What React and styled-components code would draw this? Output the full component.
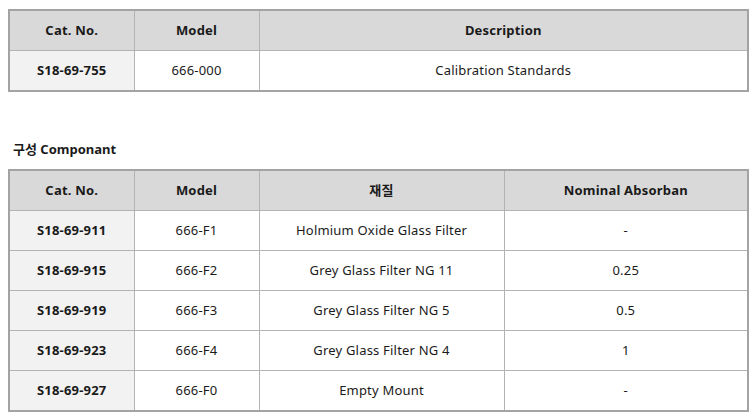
import styled, { createGlobalStyle } from "styled-components";

const GlobalStyle = createGlobalStyle`
  html, body {
    margin: 0;
    padding: 0;
    background: #ffffff;
  }
  body {
    font-family: "Noto Sans", "Noto Sans CJK KR", sans-serif;
    font-size: 13px;
    color: #1a1a1a;
  }
`;

const Page = styled.div`
  width: 741px;
  padding: 9px 0 0 8px;
`;

const Table = styled.table`
  width: 741px;
  border-collapse: collapse;
  border: 2px solid #a3a3a3;
  table-layout: fixed;
`;

const Th = styled.th`
  height: 37px;
  padding: 0 6px 2px;
  background: #d9d9d9;
  border: 1px solid #b3b3b3;
  font-weight: 700;
  text-align: center;
  letter-spacing: 0.2px;
  color: #1a1a1a;
`;

const Td = styled.td`
  height: 37px;
  padding: 0 6px 2px;
  background: ${(props) => (props.$key ? "#f2f2f2" : "#ffffff")};
  border: 1px solid #b3b3b3;
  font-weight: ${(props) => (props.$key ? 700 : 400)};
  letter-spacing: 0.2px;
  text-align: center;
`;

const Heading = styled.h3`
  margin: 48px 0 11px 5px;
  font-size: 13px;
  font-weight: 700;
  line-height: 18px;
`;

const parts = [
  ["S18-69-911", "666-F1", "Holmium Oxide Glass Filter", "-"],
  ["S18-69-915", "666-F2", "Grey Glass Filter NG 11", "0.25"],
  ["S18-69-919", "666-F3", "Grey Glass Filter NG 5", "0.5"],
  ["S18-69-923", "666-F4", "Grey Glass Filter NG 4", "1"],
  ["S18-69-927", "666-F0", "Empty Mount", "-"],
];

export default function App() {
  return (
    <Page>
      <GlobalStyle />
      <Table>
        <colgroup>
          <col style={{ width: 125 }} />
          <col style={{ width: 125 }} />
          <col />
        </colgroup>
        <thead>
          <tr>
            <Th>Cat. No.</Th>
            <Th>Model</Th>
            <Th>Description</Th>
          </tr>
        </thead>
        <tbody>
          <tr>
            <Td $key>S18-69-755</Td>
            <Td>666-000</Td>
            <Td>Calibration Standards</Td>
          </tr>
        </tbody>
      </Table>

      <Heading>구성 Componant</Heading>

      <Table>
        <colgroup>
          <col style={{ width: 125 }} />
          <col style={{ width: 125 }} />
          <col style={{ width: 245 }} />
          <col />
        </colgroup>
        <thead>
          <tr>
            <Th>Cat. No.</Th>
            <Th>Model</Th>
            <Th>재질</Th>
            <Th>Nominal Absorban</Th>
          </tr>
        </thead>
        <tbody>
          {parts.map(([cat, model, material, absorb]) => (
            <tr key={cat}>
              <Td $key>{cat}</Td>
              <Td>{model}</Td>
              <Td>{material}</Td>
              <Td>{absorb}</Td>
            </tr>
          ))}
        </tbody>
      </Table>
    </Page>
  );
}
